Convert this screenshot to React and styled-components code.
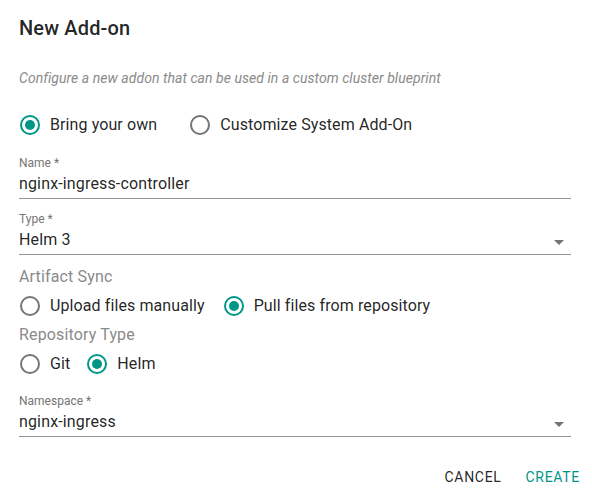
import React from 'react'
import styled, { createGlobalStyle } from 'styled-components'

const GlobalStyle = createGlobalStyle`
body {
  margin: 0;
  background: #fff;
  font-family: Roboto, "Liberation Sans", sans-serif;
  color: rgba(0, 0, 0, 0.87);
}
`

const Dialog = styled.div`
width: 592px;
height: 498px;
box-sizing: border-box;
padding: 12px 21px 0 19px;
display: flex;
flex-direction: column;
`

const Title = styled.h2`
margin: 0;
font-size: 20px;
font-weight: 500;
line-height: 32px;
letter-spacing: 0.15px;
color: rgba(0, 0, 0, 0.87);
`

const Description = styled.p`
margin: 24px 0 0;
font-size: 14px;
font-style: italic;
line-height: 20px;
letter-spacing: 0.05px;
color: #8a8a8a;
`

const RadioRow = styled.div`
display: flex;
align-items: center;
height: ${p => p.$height || 34}px;
margin-top: ${p => p.$top || 0}px;
gap: ${p => p.$gap || 18}px;
`

const RadioOption = styled.label`
display: flex;
align-items: center;
gap: 10px;
font-size: 16px;
line-height: 24px;
letter-spacing: 0.1px;
color: rgba(0, 0, 0, 0.87);
cursor: pointer;
`

const RadioIcon = styled.svg`
width: 20px;
height: 20px;
margin-left: 1px;
flex-shrink: 0;
`

const Field = styled.div`
display: flex;
flex-direction: column;
margin-top: ${p => p.$top || 12}px;
`

const FieldLabel = styled.div`
font-size: 12px;
line-height: 16px;
color: #757575;
`

const FieldInput = styled.div`
height: 28px;
box-sizing: border-box;
border-bottom: 1px solid #949494;
display: flex;
align-items: center;
justify-content: space-between;
font-size: 16px;
letter-spacing: 0.15px;
padding-bottom: 2px;
`

const Arrow = styled.svg`
width: 24px;
height: 24px;
fill: #757575;
margin-top: 4px;
`

const SectionLabel = styled.div`
margin-top: ${p => p.$top || 0}px;
font-size: 16px;
line-height: 24px;
letter-spacing: 0.15px;
color: #8a8a8a;
`

const Actions = styled.div`
display: flex;
justify-content: flex-end;
gap: 8px;
margin-top: 22px;
margin-right: -17px;
`

const Button = styled.button`
border: 0;
background: transparent;
padding: 6px 8px;
height: 36px;
font-family: Roboto, "Liberation Sans", sans-serif;
font-size: 14px;
font-weight: 400;
letter-spacing: 0.7px;
text-transform: uppercase;
color: ${p => p.$primary ? '#009688' : 'rgba(0, 0, 0, 0.87)'};
cursor: pointer;
`

const Radio = ({ checked, label }) => (
  <RadioOption>
    <RadioIcon viewBox="0 0 20 20">
      <circle cx="10" cy="10" r="9" fill="none" strokeWidth="2" stroke={checked ? '#009688' : '#757575'} />
      {checked && <circle cx="10" cy="10" r="5" fill="#009688" />}
    </RadioIcon>
    {label}
  </RadioOption>
)

const SelectArrow = () => (
  <Arrow viewBox="0 0 24 24"><path d="M7 10l5 5 5-5z" /></Arrow>
)

const App = () => (
  <Dialog>
    <GlobalStyle />
    <Title>New Add-on</Title>
    <Description>Configure a new addon that can be used in a custom cluster blueprint</Description>

    <RadioRow $height={42} $top={16} $gap={32}>
      <Radio checked label="Bring your own" />
      <Radio label="Customize System Add-On" />
    </RadioRow>

    <Field $top={9}>
      <FieldLabel>Name *</FieldLabel>
      <FieldInput>nginx-ingress-controller</FieldInput>
    </Field>

    <Field>
      <FieldLabel>Type *</FieldLabel>
      <FieldInput>Helm 3<SelectArrow /></FieldInput>
    </Field>

    <SectionLabel $top={10}>Artifact Sync</SectionLabel>
    <RadioRow>
      <Radio label="Upload files manually" />
      <Radio checked label="Pull files from repository" />
    </RadioRow>

    <SectionLabel>Repository Type</SectionLabel>
    <RadioRow $gap={16}>
      <Radio label="Git" />
      <Radio checked label="Helm" />
    </RadioRow>

    <Field>
      <FieldLabel>Namespace *</FieldLabel>
      <FieldInput>nginx-ingress<SelectArrow /></FieldInput>
    </Field>

    <Actions>
      <Button>Cancel</Button>
      <Button $primary>Create</Button>
    </Actions>
  </Dialog>
)

export default App
